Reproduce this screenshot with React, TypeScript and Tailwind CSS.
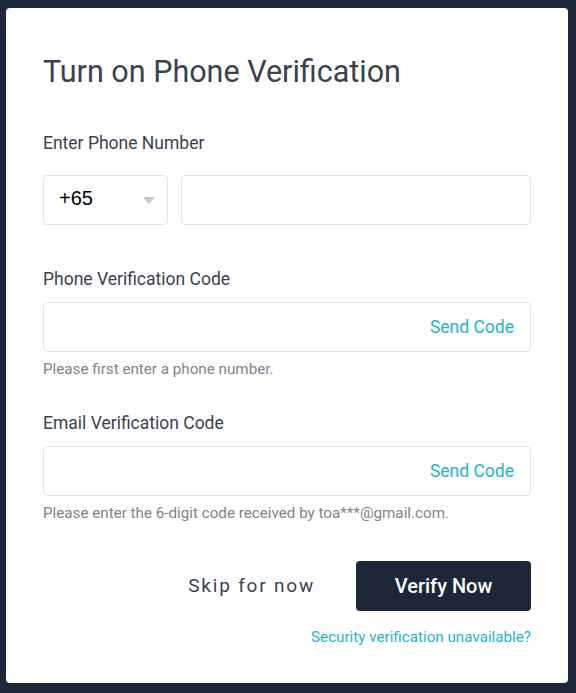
import { useState } from "react";

function CodeField({ label, hint }: { label: string; hint: string }) {
  return (
    <div className="flex flex-col">
      <label className="text-[17.5px] leading-[20px] text-[#3b4150]">{label}</label>
      <div className="mt-[13px] flex h-[50px] items-center rounded-[4px] border border-[#e3e5e9] pl-4 pr-[16px]">
        <input className="h-full flex-1 bg-transparent text-[16px] outline-none" />
        <button className="text-[17.5px] text-[#1fb3d4]">Send Code</button>
      </div>
      <p className="mt-[8px] text-[15.2px] leading-[18px] text-[#80848c]">{hint}</p>
    </div>
  );
}

export default function App() {
  const [country] = useState("+65");

  return (
    <div
      className="h-[693px] bg-[#1e2738] pt-[8px] pr-[8px] pb-[10px] pl-[6px]"
      style={{ fontFamily: "Roboto, 'Liberation Sans', sans-serif" }}
    >
      <div className="flex h-[675px] flex-col rounded-[4px] bg-white pt-[46px] pr-[37px] pl-[37px]">
        <h1 className="text-[30.5px] leading-[36px] text-[#3b4150]">Turn on Phone Verification</h1>

        {/* phone number */}
        <div className="mt-[43px] flex flex-col">
          <label className="text-[17.5px] leading-[20px] text-[#3b4150]">Enter Phone Number</label>
          <div className="mt-[22px] flex gap-[13px]">
            <div className="flex h-[50px] w-[125px] items-center justify-between rounded-[4px] border border-[#e3e5e9] pr-[12px] pl-[15px]">
              <span
                className="mb-[4px] text-[20px] text-black"
                style={{ fontFamily: "'Liberation Sans', Arial, sans-serif" }}
              >
                {country}
              </span>
              <svg width="12" height="7" viewBox="0 0 12 7">
                <path d="M0 0h12L6 7z" fill="#c4c7cd" />
              </svg>
            </div>
            <input className="h-[50px] flex-1 rounded-[4px] border border-[#e3e5e9] px-4 outline-none" />
          </div>
        </div>

        <div className="mt-[44px]">
          <CodeField label="Phone Verification Code" hint="Please first enter a phone number." />
        </div>

        <div className="mt-[35px]">
          <CodeField
            label="Email Verification Code"
            hint="Please enter the 6-digit code received by toa***@gmail.com."
          />
        </div>

        <div className="mt-[39px] flex items-center justify-end gap-[41px]">
          <button className="text-[19px] tracking-[1.8px] text-[#3b4150]">Skip for now</button>
          <button className="h-[50px] w-[175px] rounded-[4px] bg-[#1e2738] text-[20px] font-medium text-white">
            Verify Now
          </button>
        </div>

        <div className="mt-[15px] flex justify-end">
          <a className="text-[15.2px] text-[#1fb3d4]">Security verification unavailable?</a>
        </div>
      </div>
    </div>
  );
}
